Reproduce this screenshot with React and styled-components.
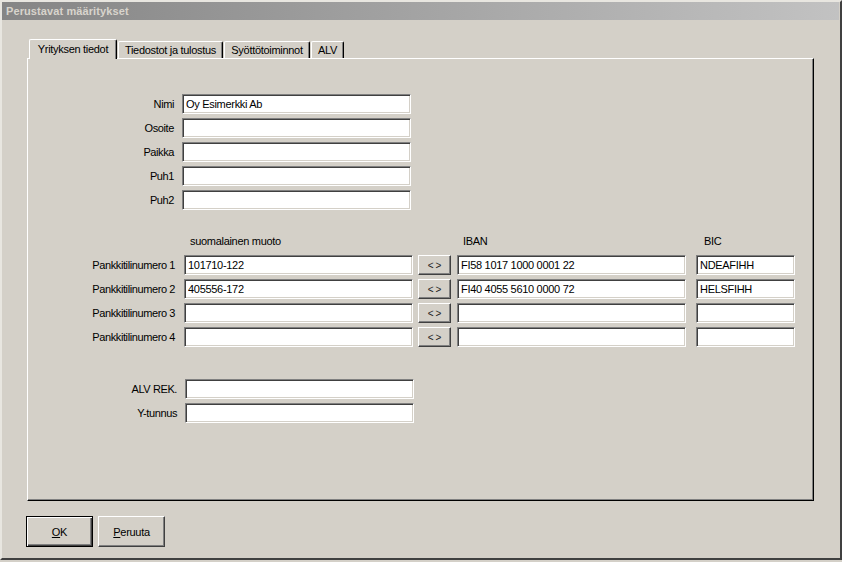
import React from 'react'
import styled, { createGlobalStyle } from 'styled-components'

const GlobalStyle = createGlobalStyle`
  html, body {
    margin: 0;
    padding: 0;
    background: #d4d0c8;
  }
  body {
    font-family: "Liberation Sans", Arial, sans-serif;
    font-size: 11px;
    color: #000;
  }
`

const Window = styled.div`
  box-sizing: border-box;
  width: 842px;
  height: 560px;
  display: flex;
  flex-direction: column;
  background: #d4d0c8;
  border-top: 2px solid #e8e6e0;
  border-left: 2px solid #e8e6e0;
  border-right: 2px solid #404040;
  border-bottom: 2px solid #404040;
  padding-right: 1px;
`

const TitleBar = styled.div`
  height: 18px;
  display: flex;
  align-items: center;
  padding-left: 4px;
  background: linear-gradient(to right, #858585, #c2c2c2);
  color: #d8d4cc;
  font-weight: bold;
  font-size: 11px;
  letter-spacing: 0.1px;
`

const Body = styled.div`
  display: flex;
  flex-direction: column;
  padding-left: 25px;
`

const TabStrip = styled.div`
  display: flex;
  align-items: flex-end;
  gap: 1px;
  height: 19px;
  margin-top: 19px;
  padding-left: 2px;
`

const Tab = styled.div`
  box-sizing: border-box;
  display: flex;
  align-items: center;
  justify-content: center;
  width: ${p => p.$width}px;
  height: ${p => (p.$active ? 20 : 17)}px;
  margin-bottom: ${p => (p.$active ? -1 : 0)}px;
  padding-bottom: ${p => (p.$active ? 2 : 0)}px;
  position: relative;
  z-index: ${p => (p.$active ? 1 : 0)};
  background: #d4d0c8;
  border-top: 1px solid #fff;
  border-left: 1px solid #fff;
  border-right: 1px solid #000;
  box-shadow: inset -1px 0 0 #808080;
  border-radius: 2px 2px 0 0;
  letter-spacing: -0.3px;
  white-space: nowrap;
`

const Panel = styled.div`
  box-sizing: border-box;
  width: 787px;
  height: 443px;
  display: flex;
  flex-direction: column;
  padding-top: 35px;
  border-top: 1px solid #fff;
  border-left: 1px solid #fff;
  border-right: 1px solid #000;
  border-bottom: 1px solid #000;
  box-shadow: inset -1px -1px 0 #808080;
`

const Section = styled.div`
  display: flex;
  flex-direction: column;
  gap: 4px;
  margin-top: ${p => p.$top || 0}px;
`

const Row = styled.div`
  display: flex;
  align-items: center;
  height: 20px;
`

const Label = styled.div`
  width: ${p => p.$width}px;
  margin-right: ${p => p.$gap}px;
  text-align: right;
  letter-spacing: -0.4px;
  white-space: nowrap;
`

const Heading = styled.div`
  width: ${p => p.$width}px;
  margin-left: ${p => p.$gap}px;
  padding-left: ${p => p.$indent}px;
  box-sizing: border-box;
  letter-spacing: -0.3px;
`

const Field = styled.input`
  box-sizing: border-box;
  width: ${p => p.$width}px;
  height: 20px;
  margin: 0 0 0 ${p => p.$gap || 0}px;
  padding: 0 3px;
  background: #fff;
  border: 1px solid;
  border-color: #808080 #fff #fff #808080;
  box-shadow: inset 1px 1px 0 #404040, inset -1px -1px 0 #d4d0c8;
  font-family: "Liberation Sans", Arial, sans-serif;
  font-size: 11px;
  letter-spacing: -0.3px;
  color: #000;
  outline: none;
`

const SwapButton = styled.button`
  box-sizing: border-box;
  width: 33px;
  height: 20px;
  margin-left: 5px;
  padding: 0;
  background: #d4d0c8;
  border: 1px solid;
  border-color: #fff #404040 #404040 #fff;
  box-shadow: inset -1px -1px 0 #808080;
  font-family: "Liberation Sans", Arial, sans-serif;
  font-size: 10px;
  color: #222;
  letter-spacing: 2px;
  text-indent: 2px;
`

const Footer = styled.div`
  display: flex;
  gap: 5px;
  margin-top: 15px;
  margin-left: -1px;
`

const DialogButton = styled.button`
  box-sizing: border-box;
  width: 67px;
  height: 31px;
  padding: 0;
  background: #d4d0c8;
  border: 1px solid;
  border-color: ${p => (p.$default ? '#000' : '#fff #404040 #404040 #fff')};
  box-shadow: ${p =>
    p.$default
      ? 'inset 1px 1px 0 #fff, inset -1px -1px 0 #404040, inset -2px -2px 0 #808080'
      : 'inset -1px -1px 0 #808080'};
  font-family: "Liberation Sans", Arial, sans-serif;
  font-size: 11px;
  letter-spacing: -0.3px;
  color: #000;
`

const basicFields = [
  { label: 'Nimi', value: 'Oy Esimerkki Ab' },
  { label: 'Osoite', value: '' },
  { label: 'Paikka', value: '' },
  { label: 'Puh1', value: '' },
  { label: 'Puh2', value: '' },
]

const accounts = [
  { local: '101710-122', iban: 'FI58 1017 1000 0001 22', bic: 'NDEAFIHH' },
  { local: '405556-172', iban: 'FI40 4055 5610 0000 72', bic: 'HELSFIHH' },
  { local: '', iban: '', bic: '' },
  { local: '', iban: '', bic: '' },
]

const tabs = [
  { name: 'Yrityksen tiedot', width: 88 },
  { name: 'Tiedostot ja tulostus', width: 105 },
  { name: 'Syöttötoiminnot', width: 86 },
  { name: 'ALV', width: 33 },
]

export default function App() {
  return (
    <>
      <GlobalStyle />
      <Window>
        <TitleBar>Perustavat määritykset</TitleBar>
        <Body>
          <TabStrip>
            {tabs.map((t, i) => (
              <Tab key={t.name} $active={i === 0} $width={t.width}>
                {t.name}
              </Tab>
            ))}
          </TabStrip>
          <Panel>
            <Section>
              {basicFields.map(f => (
                <Row key={f.label}>
                  <Label $width={146} $gap={8}>{f.label}</Label>
                  <Field $width={229} defaultValue={f.value} readOnly />
                </Row>
              ))}
            </Section>

            <Section $top={21}>
              <Row>
                <Heading $width={229} $gap={156} $indent={6}>suomalainen muoto</Heading>
                <Heading $width={229} $gap={44} $indent={6}>IBAN</Heading>
                <Heading $width={99} $gap={10} $indent={8}>BIC</Heading>
              </Row>
              {accounts.map((a, i) => (
                <Row key={i}>
                  <Label $width={147} $gap={9}>Pankkitilinumero {i + 1}</Label>
                  <Field $width={229} defaultValue={a.local} readOnly />
                  <SwapButton>&lt;&gt;</SwapButton>
                  <Field $width={229} $gap={6} defaultValue={a.iban} readOnly />
                  <Field $width={99} $gap={10} defaultValue={a.bic} readOnly />
                </Row>
              ))}
            </Section>

            <Section $top={32}>
              <Row>
                <Label $width={149} $gap={8}>ALV REK.</Label>
                <Field $width={229} readOnly />
              </Row>
              <Row>
                <Label $width={149} $gap={8}>Y-tunnus</Label>
                <Field $width={229} readOnly />
              </Row>
            </Section>
          </Panel>
          <Footer>
            <DialogButton $default>
              <u>O</u>K
            </DialogButton>
            <DialogButton>
              <u>P</u>eruuta
            </DialogButton>
          </Footer>
        </Body>
      </Window>
    </>
  )
}
